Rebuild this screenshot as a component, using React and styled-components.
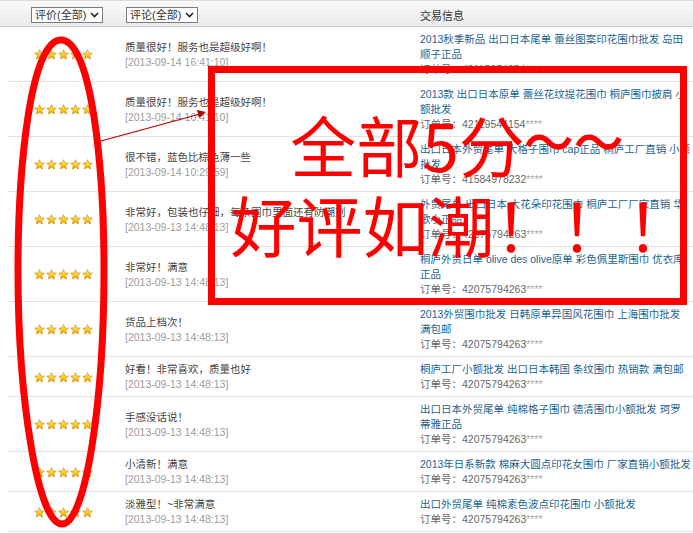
import React from "react";
import styled, { createGlobalStyle } from "styled-components";

const GlobalStyle = createGlobalStyle`
  html, body {
    margin: 0;
    padding: 0;
    background: #fff;
  }
  body {
    font-family: "Liberation Sans", "Noto Sans CJK SC", sans-serif;
    font-size: 10.5px;
    color: #404040;
  }
`;

const Page = styled.div`
  position: relative;
  width: 693px;
  height: 533px;
  overflow: hidden;
`;

const Header = styled.div`
  display: grid;
  grid-template-columns: 118px 302px 1fr;
  align-items: center;
  box-sizing: border-box;
  height: 27px;
  padding-top: 2px;
  border-top: 1px solid #dadada;
  border-bottom: 1px solid #c9c9c9;
  background: linear-gradient(#fafafa, #eaeaea);
`;

const HeadCell = styled.div`
  padding-left: ${(p) => p.$pad || 0}px;
  color: #333;
  font-size: 11px;
`;

const Select = styled.span`
  display: inline-flex;
  align-items: center;
  gap: 4px;
  box-sizing: border-box;
  height: 16px;
  padding: 0 3px 0 3px;
  border: 1px solid #7b7b7b;
  background: #fff;
  color: #333;
  font-size: 11px;
  line-height: 14px;
`;

const Row = styled.div`
  display: grid;
  grid-template-columns: 110px 302px 1fr;
  margin-left: 8px;
  padding: 5px 0 4px;
  border-bottom: 1px solid #e2e2e2;
  line-height: 15px;
`;

const StarCell = styled.div`
  display: flex;
  align-items: center;
  justify-content: center;
  gap: 1px;
`;

const CommentCell = styled.div`
  display: flex;
  flex-direction: column;
  justify-content: center;
  padding-left: 7px;
  white-space: nowrap;
`;

const CommentText = styled.div`
  color: #444;
`;

const DateText = styled.div`
  color: #9c9c9c;
`;

const TradeCell = styled.div`
  white-space: nowrap;
`;

const TradeTitle = styled.div`
  color: #24638f;
`;

const OrderNo = styled.div`
  color: #666;
  span {
    color: #aaa;
  }
`;

const Drawing = styled.svg`
  position: absolute;
  left: 0;
  top: 0;
  pointer-events: none;
`;

const RedBox = styled.div`
  position: absolute;
  left: 208px;
  top: 66px;
  width: 479px;
  height: 239px;
  box-sizing: border-box;
  border: 7px solid #ff0000;
  display: flex;
  flex-direction: column;
  align-items: center;
  justify-content: center;
  padding-bottom: 6px;
`;

const BigLine = styled.div`
  font-family: "Noto Sans CJK SC", sans-serif;
  font-size: 66px;
  line-height: 80px;
  height: 80px;
  color: #ff0000;
  white-space: nowrap;
  margin-left: ${(p) => p.$shift || 0}px;
`;

const Tilde = styled.span`
  font-size: 48px;
  line-height: 0;
  letter-spacing: 2px;
  vertical-align: 12px;
  -webkit-text-stroke: 1.5px #ff0000;
`;

const Star = () => (
  <svg width="11" height="11" viewBox="0 0 24 24">
    <defs>
      <linearGradient id="sg" x1="0" y1="0" x2="0" y2="1">
        <stop offset="0" stopColor="#fff3a0" />
        <stop offset="0.5" stopColor="#ffd21f" />
        <stop offset="1" stopColor="#f0a000" />
      </linearGradient>
    </defs>
    <polygon
      points="12,1.5 15,8.6 22.6,9.2 16.8,14.2 18.6,21.8 12,17.8 5.4,21.8 7.2,14.2 1.4,9.2 9,8.6"
      fill="url(#sg)"
      stroke="#c98400"
      strokeWidth="1.4"
      strokeLinejoin="round"
    />
  </svg>
);

const Chevron = () => (
  <svg width="9" height="6" viewBox="0 0 9 6">
    <path d="M1 1 L4.5 4.5 L8 1" fill="none" stroke="#222" strokeWidth="1.6" />
  </svg>
);

const rows = [
  {
    comment: "质量很好！服务也是超级好啊！",
    date: "[2013-09-14 16:41:10]",
    title: ["2013秋季新品 出口日本尾单 蕾丝图案印花围巾批发 岛田", "顺子正品"],
    order: "42115974354",
  },
  {
    comment: "质量很好！服务也是超级好啊！",
    date: "[2013-09-14 10:41:10]",
    title: ["2013款 出口日本原单 蕾丝花纹提花围巾 桐庐围巾披肩 小", "额批发"],
    order: "42119544154",
  },
  {
    comment: "很不错，蓝色比棕色薄一些",
    date: "[2013-09-14 10:29:59]",
    title: ["出口日本外贸尾单 大格子围巾 cap正品 桐庐工厂直销 小额", "批发"],
    order: "41584978232",
  },
  {
    comment: "非常好，包装也仔细，每条围巾里面还有防潮剂",
    date: "[2013-09-13 14:48:13]",
    title: ["外贸尾单 出口日本 大花朵印花围巾 桐庐工厂厂家直销 华", "歌小正品"],
    order: "42075794263",
  },
  {
    comment: "非常好！满意",
    date: "[2013-09-13 14:48:13]",
    title: ["桐庐外贸日单 olive des olive原单 彩色佩里斯围巾 优衣库", "正品"],
    order: "42075794263",
  },
  {
    comment: "货品上档次！",
    date: "[2013-09-13 14:48:13]",
    title: ["2013外贸围巾批发 日韩原单异国风花围巾 上海围巾批发", "满包邮"],
    order: "42075794263",
  },
  {
    comment: "好看！非常喜欢，质量也好",
    date: "[2013-09-13 14:48:13]",
    title: ["桐庐工厂小额批发 出口日本韩国 条纹围巾 热销款 满包邮"],
    order: "42075794263",
  },
  {
    comment: "手感没话说！",
    date: "[2013-09-13 14:48:13]",
    title: ["出口日本外贸尾单 纯棉格子围巾 德清围巾小额批发 珂罗", "蒂雅正品"],
    order: "42075794263",
  },
  {
    comment: "小清新！满意",
    date: "[2013-09-13 14:48:13]",
    title: ["2013年日系新款 棉麻大圆点印花女围巾 厂家直销小额批发"],
    order: "42075794263",
  },
  {
    comment: "淡雅型！~非常满意",
    date: "[2013-09-13 14:48:13]",
    title: ["出口外贸尾单 纯棉素色波点印花围巾 小额批发"],
    order: "42075794263",
  },
];

function App() {
  return (
    <Page>
      <GlobalStyle />
      <Header>
        <HeadCell $pad={31}>
          <Select>
            评价(全部) <Chevron />
          </Select>
        </HeadCell>
        <HeadCell $pad={8}>
          <Select>
            评论(全部) <Chevron />
          </Select>
        </HeadCell>
        <HeadCell>交易信息</HeadCell>
      </Header>

      {rows.map((r, i) => (
        <Row key={i}>
          <StarCell>
            <Star />
            <Star />
            <Star />
            <Star />
            <Star />
          </StarCell>
          <CommentCell>
            <CommentText>{r.comment}</CommentText>
            <DateText>{r.date}</DateText>
          </CommentCell>
          <TradeCell>
            {r.title.map((t, j) => (
              <TradeTitle key={j}>{t}</TradeTitle>
            ))}
            <OrderNo>
              订单号：{r.order}
              <span>****</span>
            </OrderNo>
          </TradeCell>
        </Row>
      ))}

      <Drawing width="693" height="533" viewBox="0 0 693 533">
        <path
          d="M61 40 C 92 40 104 170 104 270 C 104 400 86 524 62 524 C 38 524 18 400 18 270 C 18 170 30 40 61 40 Z"
          fill="none"
          stroke="#ff0000"
          strokeWidth="7"
        />
        <line x1="101" y1="141" x2="200" y2="114" stroke="#b40000" strokeWidth="1.2" />
        <polygon points="206,112 197,110 199,118" fill="#b40000" />
      </Drawing>

      <RedBox>
        <BigLine $shift={20}>
          全部5分<Tilde>～～</Tilde>
        </BigLine>
        <BigLine $shift={28}>好评如潮！！！</BigLine>
      </RedBox>
    </Page>
  );
}

export default App;
